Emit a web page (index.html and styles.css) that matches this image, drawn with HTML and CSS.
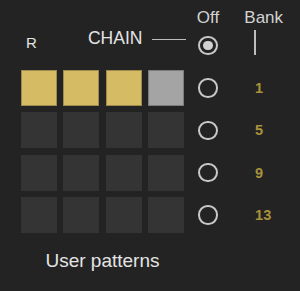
FILE: index.html
```html
<!DOCTYPE html>
<html lang="en">
<head>
    <meta charset="UTF-8">
    <title>User patterns</title>
    <link rel="stylesheet" href="styles.css">
</head>
<body>
    <div class="device">
        <div class="pads">
            <div class="pads-head">
                <span class="rec">R</span>
                <span class="chain">CHAIN<i class="chain-line"></i></span>
            </div>
            <div class="pad-grid">
                <div class="pad lit"></div>
                <div class="pad lit"></div>
                <div class="pad lit"></div>
                <div class="pad current"></div>
                <div class="pad"></div><div class="pad"></div><div class="pad"></div><div class="pad"></div>
                <div class="pad"></div><div class="pad"></div><div class="pad"></div><div class="pad"></div>
                <div class="pad"></div><div class="pad"></div><div class="pad"></div><div class="pad"></div>
            </div>
            <div class="pads-label">User patterns</div>
        </div>

        <div class="radios">
            <div class="col-head">
                <span class="col-title">Off</span>
                <span class="radio on off-radio"></span>
            </div>
            <div class="rows">
                <div class="row"><span class="radio"></span></div>
                <div class="row"><span class="radio"></span></div>
                <div class="row"><span class="radio"></span></div>
                <div class="row"><span class="radio"></span></div>
            </div>
        </div>

        <div class="banks">
            <div class="col-head bank-head">
                <span class="col-title">Bank</span>
                <i class="bank-line"></i>
            </div>
            <div class="rows">
                <div class="row bank-num">1</div>
                <div class="row bank-num">5</div>
                <div class="row bank-num">9</div>
                <div class="row bank-num">13</div>
            </div>
        </div>
    </div>
</body>
</html>
```

FILE: styles.css
```css
body {
    margin: 0;
    background: #232323;
    font-family: "Liberation Sans", Arial, sans-serif;
    color: #e4e4e4;
}

.device {
    display: flex;
    height: 291px;
    padding-left: 21px;
}

/* pads */
.pads {
    width: 165px;
}

.pads-head {
    display: flex;
    align-items: flex-start;
    height: 70px;
    padding-top: 30px;
    box-sizing: border-box;
}

.rec {
    font-size: 15px;
    line-height: 15px;
    margin: 5px 0 0 5px;
}

.chain {
    display: flex;
    align-items: center;
    margin-left: auto;
    font-size: 17.5px;
    line-height: 17.5px;
}

.chain-line {
    width: 34px;
    height: 1.5px;
    margin-left: 9.6px;
    margin-top: 1px;
    background: #bdbdbd;
}

.pad-grid {
    display: grid;
    grid-template-columns: repeat(4, 36px);
    grid-auto-rows: 36px;
    gap: 6.33px;
}

.pad {
    background: #343434;
}

.pad.lit {
    background: #d5bc64;
    box-shadow: inset 0 0 0 1px #9e8b4b;
}

.pad.current {
    background: #a4a4a4;
    box-shadow: inset 0 0 0 1px #7c7c7c;
}

.pads-label {
    width: 163px;
    margin-top: 18.4px;
    text-align: center;
    font-size: 19px;
    line-height: 19px;
}

/* radio + bank columns */
.radios {
    width: 44px;
}

.col-head {
    display: flex;
    flex-direction: column;
    height: 70px;
    padding-top: 8.8px;
    box-sizing: border-box;
}

.radios .col-head {
    align-items: center;
}

.col-title {
    font-size: 17px;
    line-height: 17px;
    color: #d2d2d2;
}

.rows {
    display: flex;
    flex-direction: column;
    gap: 6.33px;
}

.row {
    display: flex;
    align-items: center;
    justify-content: center;
    height: 36px;
}

.radio {
    display: flex;
    align-items: center;
    justify-content: center;
    width: 15.4px;
    height: 15.4px;
    border: 2px solid #c8c8c8;
    border-radius: 50%;
}

.radio.on::after {
    content: "";
    width: 9.5px;
    height: 9.5px;
    border-radius: 50%;
    background: #d2d2d2;
}

.off-radio {
    margin-top: 10.2px;
}

.banks {
    flex: 1;
    padding-left: 14.3px;
}

.bank-line {
    width: 1.5px;
    height: 25px;
    margin: 4.2px 0 0 10px;
    background: #bdbdbd;
}

.bank-num {
    justify-content: flex-start;
    padding-left: 10.8px;
    font-size: 14.5px;
    font-weight: bold;
    color: #a8923b;
}
```
